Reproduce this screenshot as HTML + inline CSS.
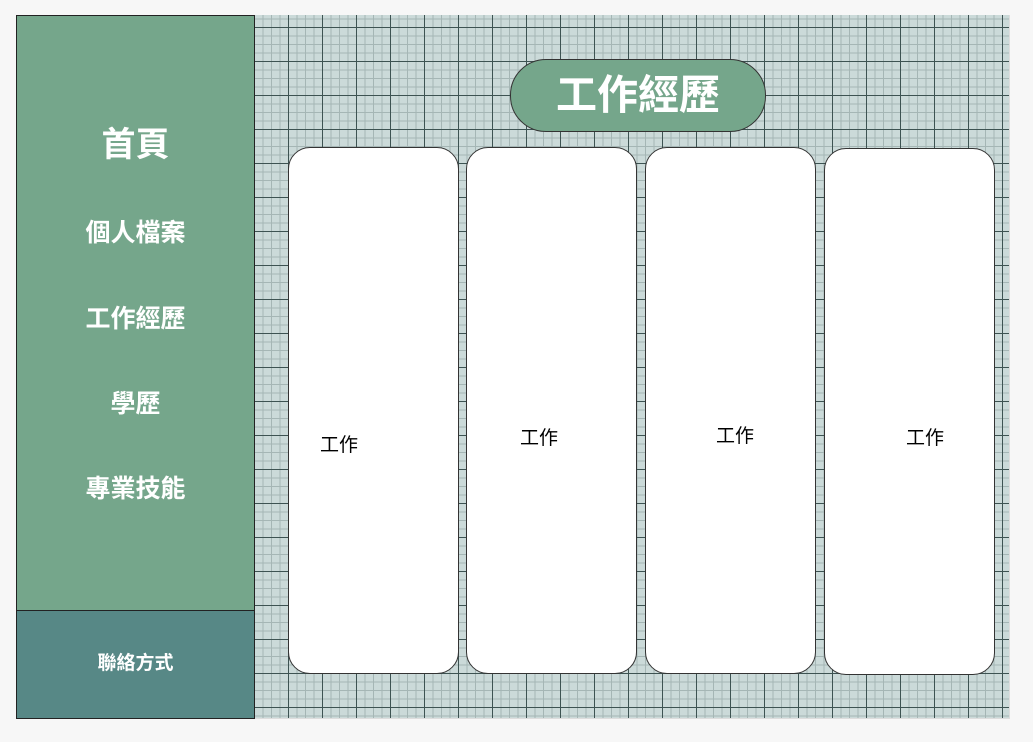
<!DOCTYPE html>
<html><head><meta charset="utf-8"><style>
body{margin:0;width:1033px;height:742px;background:#f7f7f7;position:relative;overflow:hidden;font-family:"Liberation Sans","Noto Sans CJK TC",sans-serif}
.grid{position:absolute;left:16px;top:15px;width:993px;height:703px;background-color:#cbdad9;
background-image:linear-gradient(#3d5352 1px,transparent 1px),linear-gradient(90deg,#3d5352 1px,transparent 1px),linear-gradient(#a5b6b5 1px,transparent 1px),linear-gradient(90deg,#a5b6b5 1px,transparent 1px);
background-size:34px 34px,34px 34px,8.5px 8.5px,8.5px 8.5px;background-position:0 12px,0 0,0 12px,0 0;border-right:1px solid #ddd;border-bottom:1px solid #ddd}
.side{position:absolute;left:16px;top:15px;width:237px;height:595px;background:#75a68b;border:1px solid #222;border-bottom:none;color:#fff;font-weight:bold;text-align:center}
.contact{position:absolute;left:16px;top:610px;width:237px;height:107px;background:#578886;border:1px solid #222;color:#fff;font-weight:bold;font-size:19px;text-align:center;line-height:105px}
.side div{position:absolute;left:0;width:100%}
.pill{position:absolute;left:510px;top:59px;width:254px;height:71px;border-radius:36px;background:#75a68b;border:1px solid #333;color:#fff;font-weight:bold;font-size:41px;text-align:center;line-height:71px}
.card{position:absolute;top:147px;width:169px;height:525px;background:#fff;border:1px solid #333;border-radius:22px}
.card span{position:absolute;font-size:19px;color:#000}
</style></head><body>
<div class="grid"></div>
<div class="side">
<div style="top:101px;font-size:34px">首頁</div>
<div style="top:197px;font-size:25px">個人檔案</div>
<div style="top:283px;font-size:25px">工作經歷</div>
<div style="top:368px;font-size:25px">學歷</div>
<div style="top:453px;font-size:25px">專業技能</div>
</div>
<div class="contact">聯絡方式</div>
<div class="pill">工作經歷</div>
<div class="card" style="left:288px"><span style="left:31px;top:282px">工作</span></div>
<div class="card" style="left:466px"><span style="left:53px;top:275px">工作</span></div>
<div class="card" style="left:645px"><span style="left:70px;top:273px">工作</span></div>
<div class="card" style="left:824px;top:148px"><span style="left:81px;top:274px">工作</span></div>
</body></html>
